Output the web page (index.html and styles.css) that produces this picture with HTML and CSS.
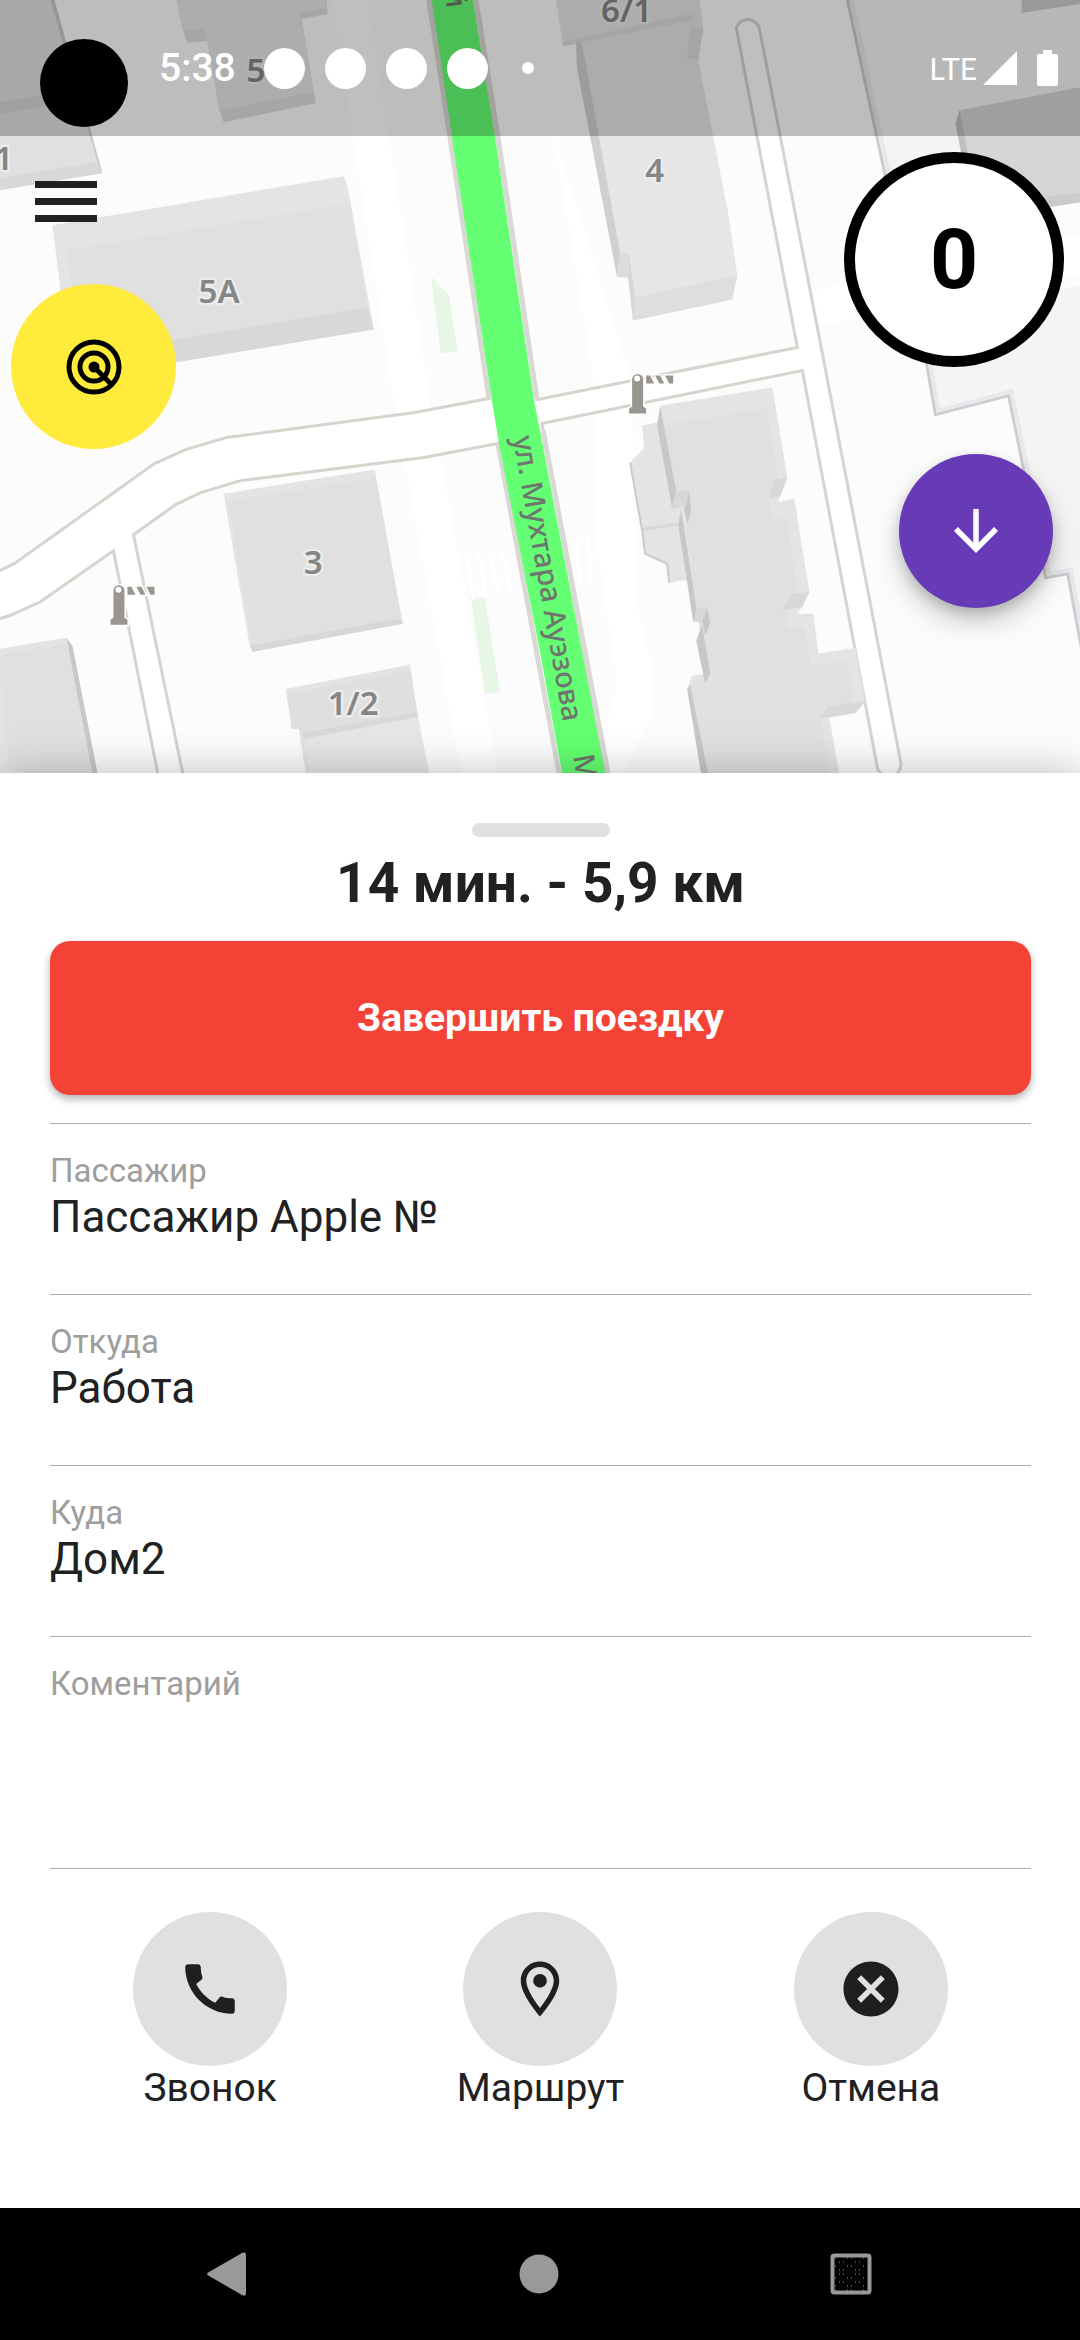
FILE: index.html
```html
<!DOCTYPE html>
<html lang="ru">
<head>
<meta charset="utf-8">
<meta name="viewport" content="width=device-width, initial-scale=1">
<title>Поездка</title>
<link rel="stylesheet" href="styles.css">
</head>
<body>
<main class="map">
  <svg class="map-canvas" viewBox="0 0 1080 772" preserveAspectRatio="xMidYMin slice" aria-hidden="true">
    <rect width="1080" height="772" fill="#fcfcfc"/>
    <!-- courtyards -->
    <path d="M847 0L890 200L1080 160V0Z" fill="#f4f4f5"/>
    <path d="M847 0L890 200" stroke="#cdcdd0" stroke-width="3"/>
    <path d="M851 0L894 200" stroke="#e8e8ec" stroke-width="4"/>
    <path d="M918 318L926 365L935 414L1010 395L1045 577L1067 573L1084 665V285Z" fill="#f4f4f5"/>
    <path d="M918 318L935 414L1008 395L1045 577L1067 573L1084 665" fill="none" stroke="#cdcdd0" stroke-width="3"/>
    <path d="M922 318L938 410L1011 391L1048 573L1070 569L1088 665" fill="none" stroke="#e8e8ec" stroke-width="4"/>
    <!-- pavements -->
    <path d="M332 0H368L389 136L430 400L441 458L498 772H461L406 467L394 400Z" fill="#fff"/>
    <path d="M532 0L594 383L597 407V547L616 675L614 703L604 727L600 772H624L628 763L650 717L654 677L634 593L633 407L629 373L555 136L535 0Z" fill="#fff"/>
    <path d="M813 290L1080 235V273L820 325Z" fill="#fff"/>
    <path d="M431 276L449 295L458 351L441 353Z M471 597L485 597L500 691L485 693Z" fill="#e6f7e6"/>
    <path d="M467 555L474 599M479 552L486 597M490 551L499 594M502 548L511 591M576 538L580 583M588 538L592 583" stroke="#fff" stroke-width="3"/>
    <!-- minor roads -->
    <path d="M114 550L159 776H184L134 534Z M0 570L15 563L155 463L186 449L227 437L415 412L489 398L525 395L540 398L797 347L736 28A12 12 0 0 1 759 28L822 353L900 760A12 12 0 0 1 877 767L802 370L540 423L498 443L424 457L241 480L201 492L176 504L41 601L10 615L0 618Z" fill="#fff"/>
    <g fill="none" stroke="#d7d4cd" stroke-width="3">
      <path d="M0 570L15 563L155 463L186 449L227 437L415 412L489 398L432 0"/>
      <path d="M0 618L10 615L41 601L114 550L159 776"/>
      <path d="M184 776L134 534L176 504L201 492L241 480L424 457L498 443L560 776"/>
      <path d="M475 0L538 399L797 347L736 28A12 12 0 0 1 759 28L822 353L900 760A12 12 0 0 1 877 767L802 370L542 423L606 776"/>
    </g>
    <!-- highlighted route -->
    <path d="M429 0L450 136L489 398M498 443L537 653L559 772M476 0L498 136L537 400M543 430L608 772" fill="none" stroke="#dad8d3" stroke-width="5"/>
    <path d="M432 0H473L495 136L534 400L540 430L605 772H562L540 651L499 443L492 400L452 136Z" fill="#64ff72"/>
    <!-- buildings -->
    <path d="M0 0H55L103 173L0 190Z" fill="#d8d8d8"/>
    <path d="M51 0H55L103 173L98 162Z" fill="#c9c9c9"/>
    <path d="M0 0H51L98 162L0 178Z" fill="#e0e0e0"/>
    <path d="M0 102L60 92V104L0 114Z" fill="#d6d6d6"/>
    <path d="M177 0L184 32L188 43L208 41L220 110L224 122L316 103L302 19L328 14L327 0Z" fill="#dedede"/>
    <path d="M177 0L184 31L205 28L220 110L314 92L300 13L327 7V0Z" fill="#e7e7e7"/>
    <path d="M53 225L344 176L348 187L374 329L176 362L72 378Z" fill="#e4e4e4"/>
    <path d="M67 250L350 203L368 307L84 354Z" fill="#e0e0e0"/>
    <path d="M84 354L368 307L374 329L90 376Z" fill="#d8d8d8"/>
    <path d="M556 0L563 46L576 44L577 68L617 277L628 277L633 320L732 299L737 275L728 213L698 60L703 28L699 0Z" fill="#e6e6e6"/>
    <path d="M576 40L577 68L617 277L620 253L582 44Z" fill="#d0d0d0"/>
    <path d="M617 277L620 253H629L628 277Z M563 42L693 13V20L563 46Z M690 28H703L698 59H687Z" fill="#dcdcdc"/>
    <path d="M629 254L635 297L633 320L628 277Z" fill="#d6d6d6"/>
    <path d="M635 297L737 275L732 299L633 320Z" fill="#dedede"/>
    <path d="M959 110L1080 87V202L980 218L955 123Z" fill="#d5d5d5"/>
    <path d="M959 110L955 123L972 215L979 215Z" fill="#c0c0c0"/>
    <path d="M1021 0V13L1080 4V0Z" fill="#cdcdcd"/>
    <path d="M1040 197L1080 193V202L1040 208Z" fill="#cbcbcb"/>
    <path d="M224 493L375 469L403 623L253 651L250 645Z" fill="#e4e4e4"/>
    <path d="M229 500L376 477L401 619L252 646Z" fill="#e0e0e0"/>
    <path d="M250 645L392 619H402L403 623L253 651Z" fill="#d7d7d7"/>
    <path d="M286 688L410 664L418 716L429 772H306L299 728H292Z" fill="#e3e3e3"/>
    <path d="M288 693L411 669L418 716L304 737L300 728H292Z" fill="#dfdfdf"/>
    <path d="M304 737L418 716L429 772H309Z" fill="#e6e6e6"/>
    <path d="M303 732L417 711L418 716L304 738Z" fill="#d8d8d8"/>
    <path d="M0 648L67 637L73 645L98 772H0Z" fill="#e3e3e3"/>
    <path d="M0 655L69 643L94 772H10Z" fill="#e0e0e0"/>
    <path d="M67 637L73 645L98 772H93Z" fill="#c8c8c8"/>
    <path d="M661 405L772 387L787 477L780 495L778 501L794 498L809 591L802 606L797 613H813L818 653L855 647L865 700L855 712L829 717L839 773H701L687 688L692 675L705 673L697 638L700 625L703 620L693 621L687 579L669 582L667 563L645 553L642 530L630 462L644 448L642 425L657 422Z" fill="#e4e4e4"/>
    <path d="M663 424L766 408L778 480L769 498L771 518L786 516L797 590L784 609L788 627L804 627L810 665L846 660L854 702L820 717L830 773H707L690 688L706 673L697 612L684 509L690 489L676 492Z" fill="#e0e0e0"/>
    <path d="M660 405L676 490L672 508L657 425Z M681 509L697 612L693 621L678 523Z M702 625L710 672L705 683L696 640Z M690 684L708 773H701L687 688Z M689 489L691 510L687 523L684 508Z M707 607L710 622L705 635L702 620Z" fill="#c8c8c8"/>
    <path d="M774 480L787 477L780 495L769 498Z M791 593L809 591L802 606L783 609Z M827 706L865 700L855 712L820 717Z M676 492L689 489L686 505L672 508Z M697 607H707L702 621H693Z M642 527L678 522V525L643 530Z" fill="#d8d8d8"/>
    <path d="M630 462L642 530L645 553L667 563L669 582" fill="none" stroke="#cbcbcb" stroke-width="2"/>
    <!-- barriers -->
    <g id="barrier" fill="#99958f" stroke="#fff" stroke-width="3" paint-order="stroke">
      <path d="M114 617V590A5 5 0 0 1 125 590V617L128 619V624H111V619Z"/>
      <path d="M128 586H132L136 594H128Z M137 586H142L146 594H141Z M147 586H155V594H151Z"/>
      <circle cx="119" cy="589" r="3" fill="#fff" stroke="none"/>
    </g>
    <use href="#barrier" x="518" y="-211"/>
    <!-- house numbers -->
    <g class="house-numbers">
      <text x="-5" y="170">1</text>
      <text x="247" y="82">5</text>
      <text x="199" y="303">5А</text>
      <text x="645" y="182">4</text>
      <text x="601" y="22">6/1</text>
      <text x="304" y="573">3</text>
      <text x="328" y="714">1/2</text>
    </g>
    <g class="street-names">
      <text transform="translate(513 437) rotate(80)">ул. Мухтара Ауэзова</text>
      <text transform="translate(573 755) rotate(80)">М</text>
      <text transform="translate(447 9) rotate(81)" text-anchor="end">й</text>
    </g>
  </svg>

  <header class="status-bar">
    <span class="camera"></span>
    <time class="clock">5:38</time>
    <span class="notices"><i></i><i></i><i></i><i></i><i class="more"></i></span>
    <span class="network">LTE</span>
    <svg class="signal" viewBox="0 0 34 34" aria-hidden="true"><path d="M34 0V34H0Z"/></svg>
    <svg class="battery" viewBox="0 0 21 36" aria-hidden="true"><path d="M6 0H15V4H19Q21 4 21 6V34Q21 36 19 36H2Q0 36 0 34V6Q0 4 2 4H6Z"/></svg>
  </header>

  <div class="controls">
    <div class="controls-left">
      <button class="menu" aria-label="Меню"><span></span><span></span><span></span></button>
      <button class="track" aria-label="Отслеживание">
        <svg viewBox="0 0 56 56" aria-hidden="true">
          <g fill="none" stroke="#000" stroke-width="5"><circle cx="28" cy="28" r="25"/><circle cx="28" cy="28" r="14"/><path d="M28 28L45 45"/></g>
          <circle cx="28" cy="28" r="5.500"/>
        </svg>
      </button>
    </div>
    <div class="controls-right">
      <output class="speed">0</output>
      <button class="down" aria-label="Вниз">
        <svg viewBox="0 0 24 24" aria-hidden="true"><path d="M20 12l-1.410-1.410L13 16.170V4h-2v12.170l-5.580-5.590L4 12l8 8 8-8z"/></svg>
      </button>
    </div>
  </div>
</main>

<section class="sheet">
  <span class="handle"></span>
  <h1 class="summary">14 мин. - 5,9 км</h1>
  <button class="finish">Завершить поездку</button>
  <dl class="details">
    <div class="field"><dt>Пассажир</dt><dd>Пассажир Apple №</dd></div>
    <div class="field"><dt>Откуда</dt><dd>Работа</dd></div>
    <div class="field"><dt>Куда</dt><dd>Дом2</dd></div>
    <div class="field comment"><dt>Коментарий</dt><dd></dd></div>
  </dl>
  <div class="actions">
    <button class="action">
      <span class="disc"><svg viewBox="0 0 24 24" aria-hidden="true"><path d="M20.010 15.380c-1.230 0-2.420-.2-3.530-.56-.35-.12-.74-.03-1.010.24l-1.570 1.970c-2.830-1.350-5.480-3.900-6.890-6.830l1.950-1.660c.27-.28.350-.67.240-1.020-.37-1.110-.56-2.300-.56-3.530 0-.54-.45-.99-.99-.99H4.190C3.650 3 3 3.240 3 3.990 3 13.280 10.730 21 20.010 21c.71 0 .99-.63.990-1.180v-3.450c0-.54-.45-.99-.99-.99z"/></svg></span>
      <span>Звонок</span>
    </button>
    <button class="action">
      <span class="disc"><svg viewBox="0 0 24 24" aria-hidden="true"><path d="M12 2C8.130 2 5 5.130 5 9c0 5.250 7 13 7 13s7-7.750 7-13c0-3.870-3.130-7-7-7zM7 9c0-2.760 2.240-5 5-5s5 2.240 5 5c0 2.880-2.880 7.190-5 9.880C9.920 16.210 7 11.850 7 9z"/><circle cx="12" cy="9" r="2.500"/></svg></span>
      <span>Маршрут</span>
    </button>
    <button class="action">
      <span class="disc"><svg viewBox="0 0 24 24" aria-hidden="true"><path d="M12 2C6.470 2 2 6.470 2 12s4.470 10 10 10 10-4.470 10-10S17.530 2 12 2zm5 13.590L15.590 17 12 13.410 8.410 17 7 15.590 10.590 12 7 8.410 8.410 7 12 10.590 15.590 7 17 8.410 13.410 12 17 15.590z"/></svg></span>
      <span>Отмена</span>
    </button>
  </div>
</section>

<nav class="system-nav">
  <button aria-label="Назад"><svg viewBox="0 0 44 44" aria-hidden="true"><path d="M4 20L37 1Q41 -1 41 3V41Q41 45 37 43L4 24Q0 22 4 20Z"/></svg></button>
  <button aria-label="Домой"><svg viewBox="0 0 44 44" aria-hidden="true"><circle cx="22" cy="22" r="19.500"/></svg></button>
  <button aria-label="Недавние"><svg viewBox="0 0 44 44" aria-hidden="true">
    <rect x="3.500" y="3.500" width="37" height="37" rx="2" fill="none" stroke="#999" stroke-width="4"/>
    <path d="M10 10H38M10 18H38M10 22H38M10 30H38" stroke="#999" stroke-dasharray="1 3 1 11"/>
    <path d="M6 6H38M6 14H38M6 26H38M6 34H38M6 38H38" stroke="#999" stroke-dasharray="1 11 1 3"/>
  </svg></button>
</nav>
</body>
</html>
```

FILE: styles.css
```css
* {
  box-sizing: border-box;
}

body {
  margin: 0;
  min-height: 100vh;
  display: flex;
  flex-direction: column;
  background: #fff;
  color: #212121;
  font-family: Roboto, "Noto Sans", sans-serif;
}

button {
  margin: 0;
  padding: 0;
  border: 0;
  background: none;
  color: inherit;
  font: inherit;
}

svg {
  display: block;
}

/* Map */

.map {
  position: relative;
  flex: 1 0 auto;
  min-height: 640px;
  overflow: hidden;
}

.map-canvas {
  position: absolute;
  inset: 0;
  width: 100%;
  height: 100%;
}

.house-numbers text {
  font: 600 33px "Noto Sans", sans-serif;
  fill: #858585;
  stroke: #ececec;
  stroke-width: 5px;
  stroke-linejoin: round;
  paint-order: stroke;
}

.street-names text {
  font: 500 29px "Noto Sans", sans-serif;
  fill: #6f756f;
}

/* Status bar */

.status-bar {
  position: relative;
  display: flex;
  align-items: center;
  height: 136px;
  padding: 0 22px 0 40px;
  background: rgba(0, 0, 0, 0.25);
  color: #fff;
}

.camera {
  width: 88px;
  height: 88px;
  margin-top: 30px;
  border-radius: 50%;
  background: #000;
}

.clock {
  margin-left: 31px;
  font-size: 39px;
  font-weight: 500;
  line-height: 44px;
}

.notices {
  display: flex;
  align-items: center;
  gap: 20px;
  margin: 0 auto 0 28px;
}

.notices i {
  width: 41px;
  height: 41px;
  border-radius: 50%;
  background: #fff;
}

.notices .more {
  width: 12px;
  height: 12px;
  margin-left: 14px;
}

.network {
  font: 400 30px/40px Lato, sans-serif;
}

.signal {
  width: 34px;
  height: 34px;
  margin: 0 20px 0 6px;
  fill: #fff;
}

.battery {
  width: 21px;
  height: 36px;
  fill: #fff;
}

/* Controls over the map */

.controls {
  position: relative;
  display: flex;
  justify-content: space-between;
  padding: 16px 16px 0 11px;
}

.controls-left,
.controls-right {
  display: flex;
  flex-direction: column;
}

.controls-right {
  align-items: flex-end;
}

.menu {
  display: flex;
  flex-direction: column;
  gap: 10px;
  width: 62px;
  margin: 29px 0 62px 24px;
}

.menu span {
  height: 7px;
  background: #212121;
}

.track,
.down {
  display: grid;
  place-items: center;
  border-radius: 50%;
}

.track {
  width: 165px;
  height: 165px;
  background: #ffeb3b;
}

.track svg {
  width: 56px;
  height: 56px;
}

.speed {
  display: grid;
  place-items: center;
  width: 220px;
  height: 215px;
  border: 11px solid #000;
  border-radius: 50%;
  background: #fff;
  color: #000;
  font-size: 84px;
  font-weight: 700;
  line-height: 96px;
}

.down {
  width: 154px;
  height: 154px;
  margin: 87px 11px 0 0;
  background: #673ab7;
  box-shadow: 0 14px 28px rgba(0, 0, 0, 0.2), 0 6px 12px rgba(0, 0, 0, 0.15);
}

.down svg {
  width: 66px;
  height: 66px;
  fill: #fff;
}

/* Bottom sheet */

.sheet {
  position: relative;
  display: flex;
  flex-direction: column;
  padding: 50px 49px 98px 50px;
  background: #fff;
  box-shadow: 0 0 40px rgba(0, 0, 0, 0.25);
}

.handle {
  align-self: center;
  width: 138px;
  height: 14px;
  border-radius: 7px;
  background: #e0e0e0;
}

.summary {
  margin: 14px 0 26px;
  font-size: 55px;
  font-weight: 700;
  line-height: 64px;
  text-align: center;
}

.finish {
  height: 154px;
  border-radius: 20px;
  background: #f44336;
  box-shadow: 0 4px 8px rgba(0, 0, 0, 0.3);
  color: #fff;
  font-size: 39px;
  font-weight: 700;
}

.details {
  margin: 28px 0 0;
  border-bottom: 1px solid #adadad;
}

.field {
  padding: 27px 0 51px;
  border-top: 1px solid #adadad;
}

.comment {
  min-height: 232px;
}

.field dt {
  color: #9e9e9e;
  font-size: 33px;
  line-height: 40px;
}

.field dd {
  margin: 0;
  font-size: 44px;
  line-height: 52px;
}

.actions {
  display: grid;
  grid-template-columns: repeat(3, 1fr);
  margin: 43px -5px 0;
}

.action {
  display: flex;
  flex-direction: column;
  align-items: center;
  font-size: 39px;
  line-height: 44px;
}

.disc {
  display: grid;
  place-items: center;
  width: 154px;
  height: 154px;
  border-radius: 50%;
  background: #e0e0e0;
}

.disc svg {
  width: 66px;
  height: 66px;
  fill: #1f1f1f;
}

/* System navigation */

.system-nav {
  position: relative;
  display: flex;
  justify-content: space-between;
  align-items: center;
  height: 132px;
  padding: 0 207px 0 205px;
  background: #000;
}

.system-nav svg {
  width: 44px;
  height: 44px;
  fill: #999;
}
```
